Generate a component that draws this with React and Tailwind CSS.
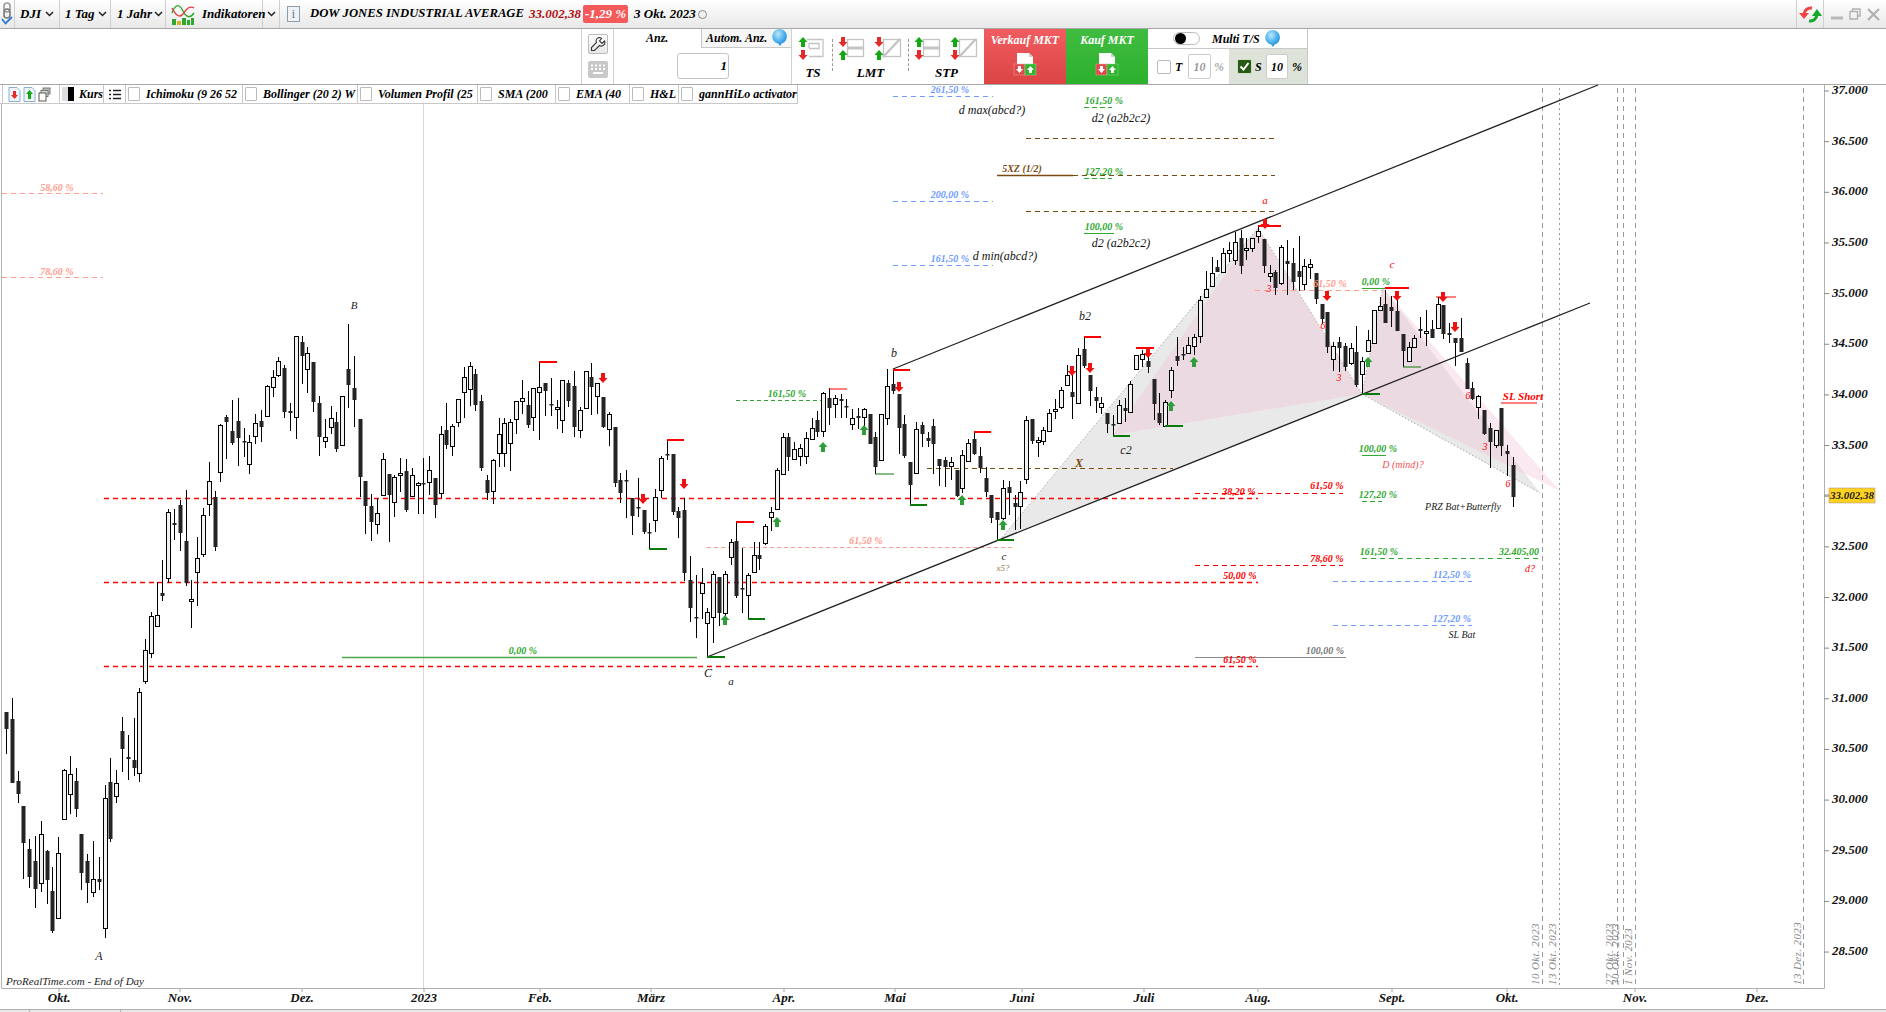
const CANDLES = [
  [712,712,729,754,0],[698,719,783,783,0],[771,781,794,803,0],[806,806,843,879,0],[839,849,877,888,0],[836,861,889,908,0],[821,834,883,892,1],[850,851,880,904,0],[867,891,931,933,0],[837,853,918,918,1],
  [769,770,819,819,1],[756,774,794,814,1],[768,781,809,817,0],[834,834,873,890,0],[854,861,883,903,0],[841,879,892,897,1],[857,879,882,890,0],[785,798,928,938,1],[758,782,839,842,0],[770,783,796,803,1],
  [717,731,749,772,0],[735,757,759,780,0],[718,760,768,776,0],[688,692,773,782,1],[639,650,681,684,1],[612,616,653,658,1],[582,615,626,626,1],[560,593,596,601,0],[509,512,578,583,1],[509,523,525,540,0],
  [500,505,533,551,0],[490,541,583,586,0],[580,599,601,628,1],[537,558,572,606,1],[508,515,554,557,1],[462,481,504,516,1],[491,497,547,551,0],[424,425,472,482,1],[415,417,422,459,0],[400,431,443,445,0],
  [398,421,438,466,0],[428,441,442,457,0],[435,442,464,474,1],[414,423,436,444,1],[410,421,427,442,0],[385,386,416,416,1],[370,377,387,397,1],[357,361,375,377,1],[365,368,412,418,0],[403,411,413,431,0],
  [336,336,417,439,1],[336,342,356,384,0],[347,353,369,393,1],[362,362,402,412,0],[396,403,437,456,0],[419,437,441,448,1],[406,418,427,434,1],[412,422,449,452,0],[396,396,445,445,1],[324,369,385,408,0],
  [356,388,400,427,0],[419,419,477,497,0],[481,481,506,534,0],[494,506,522,541,0],[498,513,524,534,1],[453,459,495,496,1],[474,474,495,542,0],[475,477,502,517,1],[458,473,475,492,1],[459,471,510,512,0],
  [468,475,496,497,1],[482,483,485,514,1],[458,483,484,514,0],[456,470,482,495,1],[478,478,505,518,0],[426,434,493,498,1],[403,430,445,449,0],[424,426,446,456,1],[399,399,422,427,1],[367,377,392,418,1],
  [362,366,389,406,1],[369,374,405,411,0],[395,401,468,471,0],[475,480,493,500,0],[459,460,491,504,1],[418,434,453,467,1],[418,423,453,467,1],[419,422,443,471,1],[401,401,419,434,1],[380,398,401,414,1],
  [391,405,425,428,0],[388,388,417,431,1],[362,387,392,440,1],[383,383,391,416,0],[378,404,405,416,0],[400,407,409,429,1],[380,380,420,433,1],[380,383,401,407,0],[371,386,427,437,0],[407,410,430,438,1],
  [371,371,408,408,1],[363,377,387,415,0],[383,383,396,414,1],[397,397,427,428,0],[412,414,429,446,1],[427,427,483,487,0],[473,480,493,503,0],[470,480,481,518,0],[498,498,516,535,0],[478,507,508,517,0],
  [510,510,532,534,0],[523,532,533,548,0],[489,497,520,532,1],[456,458,490,498,1],[440,454,455,460,0],[454,454,512,515,0],[507,511,518,538,0],[498,510,573,581,0],[556,580,608,622,0],[575,617,618,638,0],
  [568,583,593,619,1],[608,612,623,657,1],[571,574,617,643,1],[577,577,613,626,0],[571,574,613,619,1],[539,542,557,565,1],[522,541,596,598,0],[548,588,589,613,0],[573,575,595,618,1],[542,555,572,572,1],
  [542,555,559,570,0],[524,526,543,545,1],[507,512,517,531,1],[468,470,509,509,1],[433,437,474,474,1],[433,437,457,471,0],[442,449,459,459,1],[444,448,456,466,1],[432,438,456,464,1],[418,428,439,439,1],
  [411,420,432,437,0],[392,393,431,437,1],[388,398,408,425,0],[395,398,404,418,1],[394,399,401,418,0],[399,406,407,418,0],[409,418,424,430,1],[408,416,418,429,0],[408,409,417,431,1],[414,414,444,444,0],
  [432,437,467,474,0],[414,414,460,460,1],[369,386,418,425,1],[369,384,391,394,0],[394,394,428,454,0],[415,424,456,458,0],[462,462,485,504,0],[422,429,473,473,1],[422,425,434,447,0],[432,438,441,447,0],
  [419,426,444,474,0],[459,459,466,486,0],[457,460,467,487,0],[457,462,466,480,1],[470,470,496,497,0],[450,455,488,493,1],[439,443,461,461,1],[432,439,454,455,0],[447,456,468,473,0],[467,478,492,497,0],
  [495,495,518,523,0],[512,512,520,540,0],[480,488,518,520,1],[481,487,493,515,0],[495,503,507,530,0],[481,492,506,529,1],[416,420,479,484,1],[419,419,441,444,0],[437,440,442,457,1],[427,430,441,445,1],
  [409,413,431,431,1],[399,409,411,419,1],[387,390,407,409,1],[365,375,385,385,1],[373,392,397,419,0],[348,355,403,403,1],[338,349,366,368,0],[375,375,391,406,0],[387,397,401,413,0],[397,403,407,414,1],
  [413,413,424,433,0],[415,424,425,435,0],[400,405,423,423,1],[398,408,411,422,0],[381,384,412,412,1],[355,355,369,369,1],[350,354,359,367,1],[353,361,367,373,0],[379,379,404,420,0],[393,413,423,425,0],
  [400,402,426,426,1],[367,370,390,398,1],[337,356,361,366,0],[347,354,355,360,0],[337,345,353,353,1],[334,337,346,355,1],[296,300,336,343,1],[271,289,297,297,1],[257,273,286,286,1],[260,267,272,272,0],
  [248,253,272,272,1],[242,250,253,262,1],[232,242,260,265,1],[230,238,266,274,0],[238,248,250,260,1],[238,238,248,252,1],[227,231,236,243,1],[239,239,266,273,0],[265,273,276,282,1],[270,272,288,295,0],
  [245,247,283,285,1],[240,261,264,295,0],[248,263,282,290,0],[236,271,277,291,0],[259,266,284,290,1],[259,264,267,279,1],[273,273,299,304,0],[304,304,319,324,0],[312,312,347,353,0],[342,346,359,371,1],
  [337,342,348,372,0],[343,346,367,371,0],[343,348,363,365,1],[326,352,385,387,0],[357,361,374,393,1],[330,340,351,351,1],[310,310,343,343,1],[297,306,310,310,1],[290,304,323,323,0],[296,307,311,327,0],
  [300,311,331,331,0],[334,334,351,367,0],[342,347,361,361,1],[335,338,347,347,1],[317,329,331,338,0],[310,331,333,346,1],[320,329,338,338,0],[297,304,328,328,1],[305,305,334,339,0],[323,333,335,343,0],
  [338,338,343,366,0],[318,338,352,352,0],[358,363,389,389,0],[382,388,399,400,0],[395,396,407,419,1],[410,410,434,435,0],[423,428,442,468,0],[430,430,445,448,1],[408,408,446,456,0],[445,451,454,476,0],
  [457,465,497,507,0],
]

const RED = '#ff0000'
const GREEN = '#2fa82f'
const BROWN = '#7a4a10'
const BLUE = '#6f9cff'
const SALMON = '#ff9d8e'

// [x1, x2, y, color, dash, width]
const LINES = [
  [104,1258,498,RED,'5 4',1.5],[104,1258,582,RED,'5 4',1.5],[104,1258,666,RED,'5 4',1.5],
  [2,103,193,SALMON,'5 4',1],[2,103,277,SALMON,'5 4',1],
  [342,697,657,'#4aa84a','',1.5],[736,822,400,GREEN,'4 3',1],[707,1013,547,SALMON,'4 3',1],
  [893,993,96,BLUE,'5 4',1],[893,993,201,BLUE,'5 4',1],[893,993,265,BLUE,'5 4',1],
  [1026,1275,138,BROWN,'5 4',1],[1073,1275,175,BROWN,'5 4',1],[997,1073,175,BROWN,'',1.5],[1026,1275,211,BROWN,'5 4',1],[927,1173,468,BROWN,'5 4',1],
  [1084,1112,107,GREEN,'5 3',1],[1084,1112,178,GREEN,'5 3',1],[1084,1114,233,GREEN,'',1],
  [1255,1383,290,SALMON,'5 4',1],[1362,1385,288,GREEN,'',1],[1362,1386,455,GREEN,'',1],[1362,1382,501,GREEN,'5 3',1],
  [1195,1343,493,RED,'5 4',1],[1195,1343,565,RED,'5 4',1],[1195,1346,657,'#888888','',1],
  [1362,1542,558,GREEN,'5 4',1],[1333,1472,581,BLUE,'5 4',1],[1333,1472,625,BLUE,'5 4',1],
]

// [x1, x2, y, color, width]
const MARKS = [
  [539,557,362,RED,2],[667,684,440,RED,2],[736,754,522,RED,2],[829,847,389,RED,1],[893,910,370,RED,2],[974,991,432,RED,2],
  [1084,1101,337,RED,2],[1136,1154,348,RED,2],[1258,1281,226,RED,2],[1385,1409,288,RED,2],[1436,1456,297,RED,1],[1501,1537,403,RED,1],
  [649,667,549,'#0a7a0a',2],[748,765,619,'#0a7a0a',2],[707,725,657,'#0a7a0a',2],[875,894,474,'#0a7a0a',1],[910,927,505,'#0a7a0a',2],[997,1014,540,'#0a7a0a',2],
  [1113,1130,436,'#0a7a0a',2],[1165,1183,426,'#0a7a0a',2],[1362,1380,394,'#0a7a0a',2],[1403,1421,367,'#0a7a0a',1],
]

const DOWN_ARROWS = [[603,378],[643,499],[684,484],[899,387],[1072,371],[1090,368],[1148,353],[1265,224],[1327,296],[1397,296],[1443,297],[1455,327]]
const UP_ARROWS = [[725,620],[777,522],[823,447],[864,430],[962,500],[1003,525],[1171,406],[1194,362],[1368,362]]

// [x, y, text, color, size, weight]
const LABELS = [
  [57,187,'58,60 %',SALMON,10,700],[57,271,'78,60 %',SALMON,10,700],
  [523,650,'0,00 %',GREEN,10,700],[787,393,'161,50 %',GREEN,10,700],[866,540,'61,50 %',SALMON,10,700],
  [950,89,'261,50 %',BLUE,10,700],[950,194,'200,00 %',BLUE,10,700],[950,258,'161,50 %',BLUE,10,700],
  [1104,100,'161,50 %',GREEN,10,700],[1104,171,'127,20 %',GREEN,10,700],[1104,226,'100,00 %',GREEN,10,700],
  [1022,168,'5XZ (1/2)',BROWN,10,700],
  [1121,118,'d2 (a2b2c2)','#111',12,400],[1121,243,'d2 (a2b2c2)','#111',12,400],[992,110,'d max(abcd?)','#111',12,400],[1005,256,'d min(abcd?)','#111',12,400],
  [1265,200,'a',RED,11,400],[354,305,'B','#222',11,400],[99,956,'A','#222',12,400],[894,353,'b','#222',12,400],[708,673,'C','#222',12,400],[731,681,'a','#222',11,400],
  [1085,316,'b2','#222',12,400],[1126,450,'c2','#222',12,400],[1004,556,'c','#222',11,400],[1003,568,'x5?','#9a7a50',9,400],[1079,463,'X',BROWN,12,700],
  [1330,283,'61,50 %',SALMON,10,700],[1376,281,'0,00 %',GREEN,10,700],[1392,264,'c',RED,11,400],
  [1269,288,'3',RED,10,400],[1339,377,'3',RED,10,400],[1485,446,'3',RED,10,400],[1323,325,'6',RED,10,400],[1468,395,'6',RED,10,400],[1508,483,'6',RED,10,400],
  [1523,396,'SL Short',RED,11,700],[1378,448,'100,00 %',GREEN,10,700],[1403,464,'D (mind)?','#f05050',10,400],[1378,494,'127,20 %',GREEN,10,700],
  [1327,485,'61,50 %',RED,10,700],[1239,491,'38,20 %',RED,10,700],[1240,575,'50,00 %',RED,10,700],[1327,558,'78,60 %',RED,10,700],[1240,659,'61,50 %',RED,10,700],[1325,650,'100,00 %','#777',10,700],
  [1463,506,'PRZ Bat+Butterfly','#222',10,400],[1462,634,'SL Bat','#222',10,400],[1379,551,'161,50 %',GREEN,10,700],[1519,551,'32.405,00',GREEN,10,700],[1530,568,'d?',RED,10,400],
  [1452,574,'112,50 %',BLUE,10,700],[1452,618,'127,20 %',BLUE,10,700],
]

const MONTHS = [[59,'Okt.'],[180,'Nov.'],[302,'Dez.'],[424,'2023'],[540,'Feb.'],[651,'März'],[784,'Apr.'],[895,'Mai'],[1022,'Juni'],[1144,'Juli'],[1258,'Aug.'],[1392,'Sept.'],[1507,'Okt.'],[1635,'Nov.'],[1757,'Dez.']]
// 33.000 sits under the yellow last-price tag, so it has no label
const PRICES = ['37.000','36.500','36.000','35.500','35.000','34.500','34.000','33.500','','32.500','32.000','31.500','31.000','30.500','30.000','29.500','29.000','28.500']
const VLINES = [[1542,'5 4'],[1559,'2 3'],[1617,'5 4'],[1623,'5 4'],[1635,'5 4'],[1803,'5 4']]
const DATES = [[1539,'10 Okt. 2023'],[1556,'13 Okt. 2023'],[1613,'27 Okt. 2023'],[1619,'30 Okt. 2023'],[1632,'1 Nov. 2023'],[1801,'13 Dez. 2023']]

const INDICATORS = [
  ['Ichimoku (9 26 52', 117],
  ['Bollinger (20 2) W', 115],
  ['Volumen Profil (25', 120],
  ['SMA (200', 78],
  ['EMA (40', 74],
  ['H&L', 49],
  ['gannHiLo activator', 121],
]

const Chevron = () => (
  <svg width="9" height="6" viewBox="0 0 9 6" className="shrink-0">
    <path d="M1 1l3.5 3.5L8 1" fill="none" stroke="#222" strokeWidth="1.5" />
  </svg>
)

const UpArr = ({ x, y, color = '#12a812' }) => (
  <polygon points={`${x},${y} ${x + 4.5},${y + 5} ${x + 2},${y + 5} ${x + 2},${y + 10} ${x - 2},${y + 10} ${x - 2},${y + 5} ${x - 4.5},${y + 5}`} fill={color} />
)

const DownArr = ({ x, y, color = '#e52a2a' }) => (
  <polygon points={`${x},${y + 10} ${x + 4.5},${y + 5} ${x + 2},${y + 5} ${x + 2},${y} ${x - 2},${y} ${x - 2},${y + 5} ${x - 4.5},${y + 5}`} fill={color} />
)

const Bubble = () => (
  <svg width="17" height="19" viewBox="0 0 16 18" className="shrink-0">
    <defs>
      <radialGradient id="bub" cx="40%" cy="30%" r="75%">
        <stop offset="0%" stopColor="#bfe6fb" />
        <stop offset="55%" stopColor="#4db4ee" />
        <stop offset="100%" stopColor="#1a7fd0" />
      </radialGradient>
    </defs>
    <path d="M8 1a7 7 0 0 1 2 13.7L8.5 17 7 14.9A7 7 0 0 1 8 1z" fill="url(#bub)" />
  </svg>
)

const DocTrade = () => (
  <svg width="24" height="24" viewBox="0 0 24 24">
    <path d="M4 1h12l4 4v11H4z" fill="#fff" />
    <path d="M16 1l4 4h-4z" fill="#ccc" />
    <rect x="1" y="12" width="11" height="11" fill="#e14a4a" stroke="#f2a0a0" strokeWidth="0.5" />
    <rect x="12" y="12" width="11" height="11" fill="#2fb52f" stroke="#90dc90" strokeWidth="0.5" />
    <path d="M6.5 21l-3.5-4h2v-3h3v3h2z" fill="#fff" />
    <path d="M17.5 14l3.5 4h-2v3h-3v-3h-2z" fill="#fff" />
  </svg>
)

const TopBar = () => (
  <div className="h-[29px] shrink-0 flex items-stretch border-b border-[#a8a8a8] bg-linear-to-b from-[#ffffff] to-[#e8e8e8] text-[13px] text-black">
    <div className="w-[15px] shrink-0 border-r border-[#cfcfcf] flex items-center justify-center">
      <svg width="14" height="24" viewBox="0 0 14 24">
        <rect x="4" y="1" width="6" height="9" rx="3" fill="none" stroke="#9a9a9a" strokeWidth="1.6" />
        <rect x="4" y="7" width="6" height="9" rx="3" fill="none" stroke="#7a7a7a" strokeWidth="1.6" />
        <path d="M2 17l3.5 4.5L12 15" fill="none" stroke="#2a78d8" strokeWidth="1.8" />
      </svg>
    </div>
    <div className="w-[45px] shrink-0 border-r border-[#cfcfcf] flex items-center gap-[4px] pl-[5px]">DJI<Chevron /></div>
    <div className="w-[51px] shrink-0 border-r border-[#cfcfcf] flex items-center gap-[3px] pl-[5px] whitespace-nowrap">1 Tag<Chevron /></div>
    <div className="w-[55px] shrink-0 border-r border-[#cfcfcf] flex items-center gap-[2px] pl-[6px] whitespace-nowrap">1 Jahr<Chevron /></div>
    <div className="w-[97px] shrink-0 border-r border-[#cfcfcf] flex items-center gap-[7px] pl-[5px]">
      <svg width="24" height="24" viewBox="0 0 24 24" className="shrink-0">
        <path d="M1 11C5 0 9 3 12 9s7 8 11 2" fill="none" stroke="#2ea82e" strokeWidth="1.4" />
        <path d="M1 6c4 8 8 10 11 6s6-9 11-6" fill="none" stroke="#e04040" strokeWidth="1.4" />
        <rect x="1" y="17" width="4" height="6" fill="#2ea82e" />
        <rect x="6" y="19" width="4" height="4" fill="#d8b020" />
        <rect x="11" y="16" width="4" height="7" fill="#2ea82e" />
        <rect x="16" y="18" width="3" height="5" fill="#2ea82e" />
        <rect x="20" y="16" width="3" height="7" fill="#2ea82e" />
      </svg>
      Indikatoren
    </div>
    <div className="w-[17px] shrink-0 border-r border-[#cfcfcf] flex items-center justify-center"><Chevron /></div>
    <div className="flex-1 flex items-center pl-[7px] whitespace-nowrap">
      <div className="w-[13px] h-[16px] shrink-0 border border-[#8aa0b0] bg-[#eef2f5] flex items-center justify-center text-[12px] not-italic text-[#607080] font-normal">i</div>
      <span className="ml-[10px] w-[219px] shrink-0 text-[12.7px]">DOW JONES INDUSTRIAL AVERAGE</span>
      <span className="w-[54px] shrink-0 text-[#b01010]">33.002,38</span>
      <span className="w-[45px] h-[18px] shrink-0 rounded-[2px] bg-[#f55a5a] text-white flex items-center justify-center">-1,29 %</span>
      <span className="ml-[6px] w-[64px] shrink-0">3 Okt. 2023</span>
      <span className="w-[9px] h-[9px] rounded-full border border-[#888]" />
    </div>
    <div className="w-[28px] shrink-0 border-x border-[#cfcfcf] flex items-center justify-center">
      <svg width="23" height="23" viewBox="0 0 23 23">
        <path d="M13 5A7 7 0 0 0 5 11" fill="none" stroke="#ef4444" strokeWidth="3" />
        <path d="M0 10h10l-5 6z" fill="#ef4444" />
        <path d="M10 18a7 7 0 0 0 8-6" fill="none" stroke="#16a82a" strokeWidth="3" />
        <path d="M23 13H13l5-7z" fill="#16a82a" />
      </svg>
    </div>
    <div className="w-[62px] shrink-0 flex items-center justify-center gap-[6px]">
      <svg width="12" height="12" viewBox="0 0 12 12"><path d="M0 10h12" stroke="#b8b8b8" strokeWidth="3" /></svg>
      <svg width="12" height="12" viewBox="0 0 12 12"><path d="M3.5 3V1h7.5v7H8.5M1 3.5h7.5v7.5H1z" fill="none" stroke="#b0b0b0" strokeWidth="1.4" /></svg>
      <svg width="13" height="13" viewBox="0 0 13 13"><path d="M1 1l11 11M12 1L1 12" stroke="#b0b0b0" strokeWidth="2.2" /></svg>
    </div>
  </div>
)

const TradeIcons = () => (
  <>
    <div className="w-[40px] shrink-0 flex flex-col items-center">
      <svg width="40" height="29" viewBox="792 36 40 29" className="mt-[7px]">
        <UpArr x={803} y={37} /><DownArr x={803} y={50} />
        <path d="M807 39.5h16v17h-14M809 48v-4.5h10v5h-10" fill="none" stroke="#c4c4c4" strokeWidth="1.3" />
      </svg>
      <span className="pl-[2px] text-[13px] leading-[16px]">TS</span>
    </div>
    <div className="w-px h-[32px] mt-[10px] shrink-0 border-l border-dashed border-[#999]" />
    <div className="w-[75px] shrink-0 flex flex-col items-center">
      <svg width="75" height="29" viewBox="833 36 75 29" className="mt-[7px]">
        <rect x="847.5" y="39.5" width="16" height="17" fill="none" stroke="#c4c4c4" strokeWidth="1.3" />
        <path d="M847 48h16" stroke="#c4c4c4" strokeWidth="3" />
        <DownArr x={843} y={37} /><UpArr x={843} y={50} />
        <rect x="883.5" y="39.5" width="17" height="17" fill="none" stroke="#c4c4c4" strokeWidth="1.3" />
        <path d="M883 57l17-18" stroke="#c4c4c4" strokeWidth="2.4" />
        <DownArr x={879} y={37} /><UpArr x={879} y={50} />
      </svg>
      <span className="text-[13px] leading-[16px]">LMT</span>
    </div>
    <div className="w-px h-[32px] mt-[10px] shrink-0 border-l border-dashed border-[#999]" />
    <div className="w-[75px] shrink-0 flex flex-col items-center">
      <svg width="75" height="29" viewBox="909 36 75 29" className="mt-[7px]">
        <rect x="923.5" y="39.5" width="16" height="17" fill="none" stroke="#c4c4c4" strokeWidth="1.3" />
        <path d="M923 48h16" stroke="#c4c4c4" strokeWidth="3" />
        <UpArr x={919} y={37} /><DownArr x={919} y={50} />
        <rect x="959.5" y="39.5" width="17" height="17" fill="none" stroke="#c4c4c4" strokeWidth="1.3" />
        <path d="M959 57l17-18" stroke="#c4c4c4" strokeWidth="2.4" />
        <UpArr x={955} y={37} /><DownArr x={955} y={50} />
      </svg>
      <span className="text-[13px] leading-[16px]">STP</span>
    </div>
  </>
)

const Panel = () => (
  <div className="h-[56px] shrink-0 flex items-stretch border-b border-[#a8a8a8] bg-white text-[12px] text-black">
    <div className="w-[582px] shrink-0 border-r border-[#d0d0d0]" />
    <div className="w-[32px] shrink-0 border-r border-[#d0d0d0] flex flex-col items-center pt-[5px] gap-[7px]">
      <div className="w-[20px] h-[20px] rounded-[2px] border border-[#bbb] bg-linear-to-b from-[#ffffff] to-[#e8e8e8] flex items-center justify-center">
        <svg width="16" height="16" viewBox="0 0 16 16"><path d="M9 1.5a3.5 3.5 0 0 0-2.5 5L1.5 11.5v3h3l5-5a3.5 3.5 0 0 0 5-4.5L12 7.5 9.5 5 11.5 2.5A3.5 3.5 0 0 0 9 1.5z" fill="none" stroke="#333" strokeWidth="1.1" /></svg>
      </div>
      <div className="w-[20px] h-[17px] rounded-[2px] bg-[#c8c8c8] flex items-center justify-center">
        <svg width="16" height="11" viewBox="0 0 16 11"><path d="M1 1.5h2M5 1.5h2M9 1.5h2M13 1.5h2M1 5h2M5 5h2M9 5h2M13 5h2M3 9h10" stroke="#fff" strokeWidth="2" /></svg>
      </div>
    </div>
    <div className="w-[178px] shrink-0 border-r border-[#d0d0d0] relative flex flex-col items-start">
      <div className="h-[18px] w-full flex items-center justify-between">
        <span className="pl-[32px]">Anz.</span>
        <div className="w-[90px] h-[19px] border-l border-b border-[#c8c8c8] bg-[#f6f6f6] flex items-center gap-[4px] pl-[4px] whitespace-nowrap">Autom. Anz.<Bubble /></div>
      </div>
      <div className="ml-[63px] mt-[6px] w-[52px] h-[26px] rounded-[3px] border border-[#c4c4c4] flex items-center justify-end pr-[1px] text-[13px]">1</div>
    </div>
    <div className="w-[192px] shrink-0 flex items-start"><TradeIcons /></div>
    <div className="w-[82px] shrink-0 bg-linear-to-b from-[#f05c60] to-[#dc4444] flex flex-col items-center text-white whitespace-nowrap">
      <span className="mt-[4px] leading-[14px]">Verkauf MKT</span>
      <div className="mt-[5px]"><DocTrade /></div>
    </div>
    <div className="w-[82px] shrink-0 bg-linear-to-b from-[#40bc40] to-[#2cb02c] flex flex-col items-center text-white whitespace-nowrap">
      <span className="mt-[4px] leading-[14px]">Kauf MKT</span>
      <div className="mt-[5px]"><DocTrade /></div>
    </div>
    <div className="w-[160px] shrink-0 border-r border-[#c8c8c8] flex flex-col">
      <div className="h-[20px] shrink-0 border-b border-[#c8c8c8] flex items-center pl-[25px] whitespace-nowrap">
        <div className="w-[27px] h-[13px] rounded-full border border-[#bbb] bg-white flex items-center">
          <div className="w-[11px] h-[11px] rounded-full bg-black ml-[1px]" />
        </div>
        <span className="ml-[12px] mr-[4px]">Multi T/S</span>
        <Bubble />
      </div>
      <div className="flex-1 flex items-stretch">
        <div className="w-[81px] shrink-0 flex items-center pl-[9px]">
          <div className="w-[14px] h-[14px] rounded-[2px] border border-[#bbb]" />
          <span className="ml-[4px] w-[12px]">T</span>
          <div className="ml-[1px] w-[23px] h-[25px] rounded-[2px] border border-[#ccc] flex items-center justify-center text-[#999]">10</div>
          <span className="ml-[3px] text-[#aaa]">%</span>
        </div>
        <div className="flex-1 bg-[#dde3d8] flex items-center pl-[8px]">
          <div className="w-[15px] h-[15px] rounded-[2px] bg-[#275a14] border border-[#cde0c0] flex items-center justify-center">
            <svg width="11" height="11" viewBox="0 0 11 11"><path d="M1.5 5.5l3 3L9.5 2" fill="none" stroke="#fff" strokeWidth="2" /></svg>
          </div>
          <span className="ml-[3px] w-[11px]">S</span>
          <div className="w-[22px] h-[25px] rounded-[2px] border border-[#ccc] bg-white flex items-center justify-center">10</div>
          <span className="ml-[4px]">%</span>
        </div>
      </div>
    </div>
  </div>
)

const IndicatorRow = () => (
  <div className="absolute left-0 top-0 w-[798px] h-[19px] flex items-stretch border-b border-r border-[#c8c8c8] bg-white text-[12px] text-black whitespace-nowrap overflow-hidden">
    <div className="w-[58px] shrink-0 border-x border-[#c8c8c8] ml-[2px] flex items-center gap-[2px] pl-[5px]">
      <svg width="13" height="15" viewBox="0 0 13 15"><path d="M1 .5h8l3 3v11H1z" fill="#eef4fa" stroke="#8ab0d0" /><path d="M6.5 12l-3.5-4h2V4h3v4h2z" fill="#e52a2a" /></svg>
      <svg width="13" height="15" viewBox="0 0 13 15"><path d="M1 .5h8l3 3v11H1z" fill="#eef4fa" stroke="#8ab0d0" /><path d="M6.5 3l3.5 4h-2v5h-3V7h-2z" fill="#12a812" /></svg>
      <svg width="13" height="15" viewBox="0 0 13 15"><rect x="5" y="1" width="7" height="6" fill="#bbb" stroke="#777" /><rect x="3" y="3.5" width="7" height="6" fill="#ddd" stroke="#777" /><rect x="1" y="6" width="7" height="8" fill="#fff" stroke="#555" /></svg>
    </div>
    <div className="w-[44px] shrink-0 border-r border-[#c8c8c8] flex items-center overflow-hidden">
      <div className="ml-[2px] w-[6px] h-[14px] bg-[#ddd] shrink-0" />
      <div className="w-[6px] h-[14px] bg-black shrink-0" />
      <span className="ml-[5px]">Kurs</span>
    </div>
    <div className="w-[22px] shrink-0 border-r border-[#c8c8c8] flex items-center justify-center">
      <svg width="12" height="11" viewBox="0 0 12 11"><path d="M0 1.5h2M4 1.5h8M0 5.5h2M4 5.5h8M0 9.5h2M4 9.5h8" stroke="#222" strokeWidth="1.6" /></svg>
    </div>
    {INDICATORS.map(([label, width], i) => (
      <div key={label} style={{ width }} className={`shrink-0 flex items-center overflow-hidden pl-[2px] ${i < INDICATORS.length - 1 ? 'border-r border-[#c8c8c8]' : ''}`}>
        <div className="w-[12px] h-[14px] shrink-0 rounded-[1px] border border-[#bbb]" />
        <span className="ml-[6px]">{label}</span>
      </div>
    ))}
  </div>
)

const Chart = () => (
  <svg width="1886" height="924" viewBox="0 85 1886 924" className="block absolute inset-0 overflow-visible">
    <path d="M1.5 85V988" stroke="#b4b4b4" />
    <path d="M423.5 85V988" stroke="#d8d8d8" />
    {VLINES.map(([x, dash]) => (
      <path key={x} d={`M${x}.5 88V988`} stroke="#999" strokeDasharray={dash} />
    ))}

    <polygon points="1000,540 1258,228 1362,394" fill="#e9e9e9" />
    <polygon points="1362,394 1383,288 1540,493" fill="#e9e9e9" />
    <path d="M1000 540L1258 228 1362 394M1362 394L1540 493M1383 288L1362 394" fill="none" stroke="#aaa" strokeDasharray="1.5 2" />
    <polygon points="1113,435 1258,228 1362,394" fill="rgb(243,192,215)" fillOpacity="0.35" />
    <polygon points="1362,394 1383,288 1560,491" fill="rgb(243,192,215)" fillOpacity="0.35" />

    {LINES.map(([x1, x2, y, color, dash, width], i) => (
      <line key={i} x1={x1} x2={x2} y1={y + 0.5} y2={y + 0.5} stroke={color} strokeDasharray={dash} strokeWidth={width} />
    ))}

    {CANDLES.map(([top, open, close, low, white], i) => {
      const x = Math.round(6 + i * 5.796)
      return (
        <g key={i}>
          <line x1={x + 0.5} x2={x + 0.5} y1={top} y2={low} stroke="#000" />
          {white
            ? <rect x={x - 1.5} y={open + 0.5} width="4" height={Math.max(close - open, 1)} fill="#f2f2f2" stroke="#000" />
            : <rect x={x - 1.5} y={open} width="4" height={Math.max(close - open, 1.5)} fill="#242424" />}
        </g>
      )
    })}

    <line x1="707" y1="657" x2="1590" y2="303" stroke="#222" strokeWidth="1.3" />
    <line x1="893" y1="369" x2="1598" y2="85" stroke="#222" strokeWidth="1.3" />

    {MARKS.map(([x1, x2, y, color, width], i) => (
      <line key={i} x1={x1} x2={x2} y1={y} y2={y} stroke={color} strokeWidth={width} />
    ))}
    {DOWN_ARROWS.map(([x, y]) => <DownArr key={`${x}d`} x={x} y={y - 5} color="#f01010" />)}
    {UP_ARROWS.map(([x, y]) => <UpArr key={`${x}u`} x={x} y={y - 5} color="#2f9e3a" />)}

    {LABELS.map(([x, y, text, color, size, weight], i) => (
      <text key={i} x={x} y={y + size * 0.35} textAnchor="middle" fill={color} fontSize={size} fontWeight={weight}>{text}</text>
    ))}
    <text x="6" y="985" fontSize="11" fontWeight="400" fill="#222">ProRealTime.com - End of Day</text>
    {DATES.map(([x, text]) => (
      <text key={x} transform={`rotate(-90 ${x} 985)`} x={x} y="985" fontSize="11" letterSpacing="0.4" fontWeight="400" fill="#888">{text}</text>
    ))}

    <path d="M1824.5 85V988.5H1.5" fill="none" stroke="#b0b0b0" />
    {PRICES.map((label, i) => {
      const y = 91 + i * 50.65
      return (
        <g key={i}>
          <line x1="1824" x2="1829" y1={y} y2={y} stroke="#888" />
          {label && <text x="1832" y={y + 3} fontSize="13" fill="#111">{label}</text>}
        </g>
      )
    })}
    {MONTHS.map(([x, label]) => (
      <g key={`${x}${label}`}>
        <line x1={x} x2={x} y1="988" y2="992" stroke="#aaa" />
        <text x={x} y="1002" textAnchor="middle" fontSize="13" fill="#111">{label}</text>
      </g>
    ))}
    <rect x="1829" y="488" width="46" height="15" fill="#ffd21f" stroke="#a88" strokeWidth="0.5" />
    <line x1="1824" x2="1829" y1="495" y2="495" stroke="#888" />
    <text x="1852" y="499" textAnchor="middle" fontSize="11" fill="#222">33.002,38</text>
  </svg>
)

export default function App() {
  return (
    <div className="w-[1886px] h-[1012px] flex flex-col overflow-hidden bg-white font-['Liberation_Serif',serif] italic font-bold">
      <TopBar />
      <Panel />
      <div className="flex-1 relative">
        <Chart />
        <IndicatorRow />
      </div>
      <div className="h-[3px] shrink-0 flex bg-[#e8e8e8] border-t border-[#b0b0b0]">
        <div className="w-[30px] border-r border-[#b0b0b0]" />
        <div className="w-[91px] border-r border-[#b0b0b0]" />
      </div>
    </div>
  )
}
